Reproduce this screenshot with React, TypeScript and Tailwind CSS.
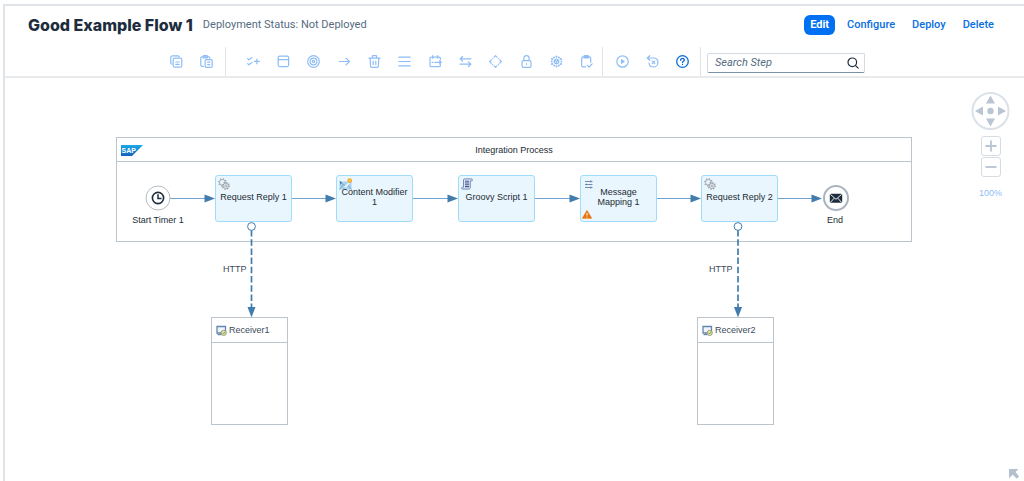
import React from "react";

type IconProps = { children: React.ReactNode; className?: string };

function Icon({ children, className = "size-[13px]" }: IconProps) {
  return (
    <svg
      viewBox="0 0 13 13"
      className={className}
      fill="none"
      stroke="currentColor"
      strokeWidth={1.2}
      strokeLinecap="round"
      strokeLinejoin="round"
      aria-hidden="true"
    >
      {children}
    </svg>
  );
}

const clipboardTools = [
  {
    label: "Copy",
    icon: (
      <Icon>
        <path d="M1.8 9.2C1 9 .8 8.4.8 7.8V2.4C.8 1.4 1.4.8 2.4.8h5.4c.8 0 1.3.3 1.5 1" />
        <rect x="3.2" y="3.2" width="8.6" height="9" rx="1.5" />
        <path d="M5.8 7h3.5M5.8 9.3h3.5" />
      </Icon>
    ),
  },
  {
    label: "Paste",
    icon: (
      <Icon>
        <path d="M3.5 11.4H2.2c-.8 0-1.4-.6-1.4-1.4V3.2c0-.8.6-1.4 1.4-1.4h6.4c.8 0 1.4.5 1.4 1.4" />
        <path d="M3.2 2.8V1.2c0-.4.2-.6.6-.6h3c.4 0 .6.2.6.6v1.6z" />
        <rect x="5.2" y="4.6" width="7" height="7.8" rx="1.2" />
        <path d="M7.6 7.2h2.2M7.6 9.6h2.2" />
      </Icon>
    ),
  },
];

const stepTools = [
  {
    label: "Mapping",
    icon: (
      <Icon>
        <path d="M.6 3.6l1.3 1.2L5 2.4M.6 8.6l1.3 1.2L5 7.4M7.4 6.4h5M9.9 4v4.8" />
      </Icon>
    ),
  },
  {
    label: "Participants",
    icon: (
      <Icon>
        <rect x="1.2" y="1.2" width="10.4" height="10.4" rx="1.5" />
        <path d="M1.2 4.6h10.4" />
      </Icon>
    ),
  },
  {
    label: "Events",
    icon: (
      <Icon>
        <circle cx="6.5" cy="6.5" r="5.8" />
        <circle cx="6.5" cy="6.5" r="3.4" />
        <circle cx="6.5" cy="6.5" r="1.1" />
      </Icon>
    ),
  },
  {
    label: "Connector",
    icon: (
      <Icon>
        <path d="M1.4 6.5h10M8 3.1l3.5 3.4L8 9.9" />
      </Icon>
    ),
  },
  {
    label: "Delete step",
    icon: (
      <Icon>
        <path d="M1 3.2h11M4.4 3V1.2c0-.4.2-.6.6-.6h3c.4 0 .6.2.6.6V3M2.2 3.2l.4 7.8c0 .8.5 1.3 1.3 1.3h5.2c.8 0 1.3-.5 1.3-1.3l.4-7.8M5.2 6.2v3.3M7.8 6.2v3.3" />
      </Icon>
    ),
  },
  {
    label: "List",
    icon: (
      <Icon>
        <path d="M.8 2.2h11.4M.8 6.5h11.4M.8 10.8h11.4" />
      </Icon>
    ),
  },
  {
    label: "Call",
    icon: (
      <Icon>
        <path d="M11.4 4.6V3.4c0-.8-.5-1.3-1.3-1.3H2.3C1.500 2.100 1 2.600 1 3.400v7c0 .8.5 1.300 1.300 1.300h7.800c.8 0 1.300-.5 1.300-1.300V9.600M3.700.6v2.600M8.700.6v2.600M3.200 7.300h.8M5.800 7.300h6.400M10.600 5.700l1.700 1.600-1.700 1.600" />
      </Icon>
    ),
  },
  {
    label: "Message routing",
    icon: (
      <Icon>
        <path d="M12 3.8H1.200M3.600 1.500L1.200 3.800l2.400 2.300M1 9.200h10.800M9.400 6.900l2.400 2.300-2.400 2.300" />
      </Icon>
    ),
  },
  {
    label: "Gateway",
    icon: (
      <Icon>
        <path d="M5 2.200L6.500.7l1.500 1.500M10.800 5l1.500 1.500L10.800 8M8 10.800l-1.500 1.500L5 10.800M2.200 8L.7 6.500 2.200 5M3.500 3.700l.1-.1M9.400 3.600l.1.1M9.400 9.500l.1-.1M3.500 9.400l.1.1" />
      </Icon>
    ),
  },
  {
    label: "Security",
    icon: (
      <Icon>
        <rect x="2" y="5.600" width="9" height="6.700" rx="1.300" />
        <path d="M3.900 5.500V3.200C3.900 1.600 5 .6 6.500.6s2.600 1 2.600 2.600v2.300M6.500 8.500v1" />
      </Icon>
    ),
  },
  {
    label: "Persistence",
    icon: (
      <Icon>
        <path d="M6.500 1.400v.4M6.500 11.200v.4M1.900 3.900l.4.200M11.100 3.900l-.4.200M1.900 9.100l.4-.2M11.100 9.100l-.4-.2M4.100 2.500l.1-.1M8.900 2.500l-.1-.1M4.100 10.500l.1.100M8.900 10.500l-.1.100M1.600 6.500h.1M11.400 6.500h.1" strokeWidth={1.900} />
        <path d="M6.500 4l2.200 1.200v2.600L6.500 9 4.300 7.800V5.200zM6.500 6.500v2.300M4.500 5.400l2 1.100 2-1.100" />
      </Icon>
    ),
  },
  {
    label: "Validator",
    icon: (
      <Icon>
        <path d="M5.600 11.900H3c-.8 0-1.300-.5-1.300-1.300V3.200c0-.8.5-1.300 1.300-1.300h6.400c.8 0 1.300.5 1.300 1.300v4M4 3V1.200c0-.4.2-.6.600-.6h3.200c.4 0 .6.2.6.6V3zM7.400 10.400l1.700 1.700 3-3.300" />
      </Icon>
    ),
  },
];

const runTools = [
  {
    label: "Run simulation",
    tone: "text-[#8fbdf5]",
    icon: (
      <Icon>
        <circle cx="6.500" cy="6.500" r="5.700" />
        <path d="M5.500 4.800v3.400l2.600-1.700z" fill="currentColor" />
      </Icon>
    ),
  },
  {
    label: "Clear simulation",
    tone: "text-[#8fbdf5]",
    icon: (
      <Icon>
        <path d="M1.400 3h6.200c2.600 0 4.300 1.900 4.300 4.400S10 12 7.500 12c-2.600 0-4.300-1.700-4.500-4M3.700.7L1.300 3l2.400 2.300M6.200 6.100l2.600 2.600M8.800 6.100L6.200 8.700" />
      </Icon>
    ),
  },
  {
    label: "Help",
    tone: "text-[#0a6cd9]",
    icon: (
      <Icon>
        <circle cx="6.500" cy="6.500" r="5.800" strokeWidth={1.300} />
        <path d="M4.700 5.200c0-1.100.8-1.800 1.800-1.800s1.800.7 1.800 1.600c0 1.300-1.800 1.300-1.800 2.600M6.500 9.500v.1" strokeWidth={1.400} />
      </Icon>
    ),
  },
];

function ToolButton({ label, tone = "text-[#8fbdf5]", children }: { label: string; tone?: string; children: React.ReactNode }) {
  return (
    <button type="button" aria-label={label} className={`flex h-7 flex-1 items-center justify-center ${tone}`}>
      {children}
    </button>
  );
}

function GearsIcon() {
  return (
    <svg viewBox="0 0 12 12" className="size-3" fill="none" stroke="#a0a8ae" aria-hidden="true">
      <circle cx="4.400" cy="4.400" r="2.900" strokeWidth="1" />
      <circle cx="4.400" cy="4.400" r="3.700" strokeWidth="1.300" strokeDasharray="1.200 1.700" />
      <circle cx="7.800" cy="7.800" r="2.700" fill="#e6eef3" strokeWidth="1" />
      <circle cx="7.800" cy="7.800" r="3.500" strokeWidth="1.300" strokeDasharray="1.200 1.550" />
      <circle cx="7.800" cy="7.800" r="1" strokeWidth=".9" />
    </svg>
  );
}

function ModifierIcon() {
  return (
    <svg viewBox="0 0 14 12" className="h-3 w-3.5" aria-hidden="true">
      <path d="M.5 3.500h12v8H.5z" fill="#a9d2ee" />
      <path d="M.5 3.500l6 4.500 6-4.500M.5 11.500l4-5M12.500 11.500l-4-5" fill="none" stroke="#6fa6cf" strokeWidth=".9" />
      <path d="M5 8.500L10 4l1.200 1.200L6.500 10z" fill="#e8f3fa" />
      <path d="M1 3l2 1.500L1 7z" fill="#3f7fb5" />
      <circle cx="10.700" cy="2.600" r="2.300" fill="#f5a623" />
      <circle cx="10.700" cy="2.600" r="1.100" fill="#ffd34d" />
    </svg>
  );
}

function ScriptIcon() {
  return (
    <svg viewBox="0 0 12 12" className="size-3" fill="none" stroke="#6a7fae" aria-hidden="true">
      <path d="M3.200.9h7.200c1.400 0 1.400 2 0 2H9.300v6.600c0 1-.5 1.600-1.400 1.600H1.600c-1.300 0-1.300-1.900 0-1.900h.9V2c0-.6.200-1.100.7-1.100z" fill="#dbe4f4" strokeWidth=".9" />
      <path d="M4 3.200h4M4 5h4M4 6.800h4M4 8.600h4" stroke="#44598f" strokeWidth="1.100" />
    </svg>
  );
}

function MappingIcon() {
  return (
    <svg viewBox="0 0 12 12" className="size-3" fill="none" stroke="#7189b5" aria-hidden="true">
      <path d="M2 3.500h7.500M2 6.500h7.500M2 9.500h7.500" strokeWidth="1" />
      <path d="M7.300 2.500l1.700 1-1.700 1M3.500 5.500v2M7.300 8.500l1.700 1-1.700 1" strokeWidth=".7" />
    </svg>
  );
}

function WarningIcon() {
  return (
    <svg viewBox="0 0 10 9" className="h-[9px] w-2.5" role="img" aria-label="Warning">
      <path d="M5 .4L9.700 8.300H.3z" fill="#e9730c" stroke="#e9730c" strokeWidth=".6" strokeLinejoin="round" />
      <path d="M5 3v2.600M5 6.600v.9" stroke="#fff" strokeWidth="1" />
    </svg>
  );
}

function ReceiverIcon() {
  return (
    <svg viewBox="0 0 11 11" className="size-[11px]" aria-hidden="true">
      <path d="M1 1.500h8.500v6.500H1z" fill="#eef4fa" stroke="#6485ae" strokeWidth="1.300" />
      <path d="M1.500 9.600h4" stroke="#6485ae" strokeWidth="1.200" />
      <circle cx="7.700" cy="7.900" r="2.600" fill="#dfe3a5" stroke="#87906d" strokeWidth=".8" />
      <path d="M6.500 7.900l1 1 1.600-1.900" fill="none" stroke="#6f8f3a" strokeWidth=".8" />
    </svg>
  );
}

const steps = [
  { name: "Request Reply 1", place: "left-[211px]", icon: <GearsIcon />, warn: false },
  { name: "Content Modifier 1", place: "left-[332px]", icon: <ModifierIcon />, warn: false },
  { name: "Groovy Script 1", place: "left-[454px]", icon: <ScriptIcon />, warn: false },
  { name: "Message Mapping 1", place: "left-[576px]", icon: <MappingIcon />, warn: true },
  { name: "Request Reply 2", place: "left-[697px]", icon: <GearsIcon />, warn: false },
];

function StepNode({ name, place, icon, warn }: (typeof steps)[number]) {
  return (
    <div
      className={`absolute top-[97px] flex h-[47px] w-[77px] items-center justify-center rounded-[3px] border border-[#9fdbfb] bg-[#eaf6fe] px-1 pb-1 text-center ${place}`}
    >
      <span className="absolute left-0.5 top-0.5">{icon}</span>
      <span className="relative">{name}</span>
      {warn && (
        <span className="absolute bottom-0.5 left-px">
          <WarningIcon />
        </span>
      )}
    </div>
  );
}

function Receiver({ name, place }: { name: string; place: string }) {
  return (
    <div className={`absolute top-[239px] h-[108px] w-[77px] border border-[#bcc5ce] bg-white ${place}`}>
      <div className="flex h-[25px] items-center gap-0.5 border-b border-[#bcc5ce] pl-1 text-[#3c4a5a]">
        <ReceiverIcon />
        <span>{name}</span>
      </div>
    </div>
  );
}

const flowLines = [
  { from: 166, to: 211 },
  { from: 288, to: 332 },
  { from: 409, to: 454 },
  { from: 531, to: 576 },
  { from: 653, to: 697 },
  { from: 774, to: 818 },
];

function Connections() {
  return (
    <svg viewBox="0 0 920 360" className="absolute left-0 top-0 h-[360px] w-[920px]" aria-hidden="true">
      {flowLines.map(({ from, to }) => (
        <g key={from}>
          <path d={`M${from} 120.500H${to - 9}`} stroke="#6ea3cf" strokeWidth="1.200" />
          <path d={`M${to} 120.500l-10.500-4v8z`} fill="#427cac" />
        </g>
      ))}
      {[247.500, 734].map((x) => (
        <g key={x}>
          <path d={`M${x} 152V230`} stroke="#427cac" strokeWidth="1.700" strokeDasharray="6.500 2.700" />
          <path d={`M${x} 239.500l-4-10.500h8z`} fill="#427cac" />
          <circle cx={x} cy="148.500" r="3.900" fill="#fff" stroke="#427cac" strokeWidth="1" />
        </g>
      ))}
    </svg>
  );
}

function Navigator() {
  return (
    <div className="absolute right-3.5 top-3.5 flex w-[39px] flex-col items-center text-[#b9c5d2]">
      <button type="button" aria-label="Pan" className="size-[39px]">
        <svg viewBox="0 0 39 39" fill="currentColor" className="size-[39px]">
          <circle cx="19.500" cy="19" r="18" fill="#fff" stroke="#dbe1e8" strokeWidth="2" />
          <circle cx="19.500" cy="19" r="3.200" />
          <path d="M19.500 3.500l4.500 8h-9zM19.500 34.500l4.500-8h-9zM4 19l8-4.500v9zM35 19l-8-4.500v9z" />
        </svg>
      </button>
      <button type="button" aria-label="Zoom in" className="mt-[5px] flex size-5 items-center justify-center rounded-[3px] border border-[#d5dce4] bg-white">
        <svg viewBox="0 0 12 12" className="size-3" fill="none" stroke="currentColor" strokeWidth="1.800">
          <path d="M6 .5v11M.5 6h11" />
        </svg>
      </button>
      <button type="button" aria-label="Zoom out" className="mt-px flex size-5 items-center justify-center rounded-[3px] border border-[#d5dce4] bg-white">
        <svg viewBox="0 0 12 12" className="size-3" fill="none" stroke="currentColor" strokeWidth="1.800">
          <path d="M.5 6h11" />
        </svg>
      </button>
      <a href="#zoom" className="mt-2.5 text-[9px] leading-3 text-[#8fbdf5]">
        100%
      </a>
    </div>
  );
}

export default function App() {
  return (
    <div className="flex min-h-screen flex-col bg-white pl-[3px] pt-1 font-[Roboto,'Open_Sans',sans-serif]">
      <div className="flex grow flex-col border-l-2 border-t-2 border-[#e0e3e7]">
        <header className="flex h-[41px] items-center justify-between pb-1 pl-[23px] pr-[30px]">
          <div className="flex items-center gap-2.5">
            <h1 className="font-[Inter,sans-serif] text-[16px] font-extrabold leading-5 text-[#1d2d3e]">Good Example Flow 1</h1>
            <p className="text-[11px] leading-4 text-[#556b82]">Deployment Status: Not Deployed</p>
          </div>
          <div className="flex items-center gap-[17px] text-[11px] font-medium leading-5 text-[#0a6fe0]">
            <button type="button" className="mr-[-5px] h-5 rounded-[6px] bg-[#0070f2] px-1.5 font-bold text-white">
              Edit
            </button>
            <button type="button">Configure</button>
            <button type="button">Deploy</button>
            <button type="button">Delete</button>
          </div>
        </header>

        <div className="flex h-[31px] justify-center border-b-2 border-[#e8eaec] pr-[3px]">
          <div className="flex w-[65px] items-center border-r border-[#e0e3e7] pr-1">
            {clipboardTools.map((t) => (
              <ToolButton key={t.label} label={t.label}>
                {t.icon}
              </ToolButton>
            ))}
          </div>
          <div className="flex w-[377px] items-center border-r border-[#e0e3e7] pl-3">
            {stepTools.map((t) => (
              <ToolButton key={t.label} label={t.label}>
                {t.icon}
              </ToolButton>
            ))}
          </div>
          <div className="flex w-[98px] items-center border-r border-[#e0e3e7] pl-1 pr-[3px]">
            {runTools.map((t) => (
              <ToolButton key={t.label} label={t.label} tone={t.tone}>
                {t.icon}
              </ToolButton>
            ))}
          </div>
          <label className="ml-1.5 mt-1.5 flex h-5 w-[158px] items-center rounded-[2px] border border-[#d3dae2] border-b-[#7b91a8] bg-white pl-[7px] pr-[5px]">
            <input
              type="text"
              aria-label="Search Step"
              placeholder="Search Step"
              className="min-w-0 flex-1 text-[11px] italic leading-4 text-[#1d2d3e] outline-none placeholder:text-[#556b82]"
            />
            <svg viewBox="0 0 12 12" className="size-3" fill="none" stroke="#1d2d3e" strokeWidth="1.200" strokeLinecap="round" aria-hidden="true">
              <circle cx="5.300" cy="5.300" r="4.300" />
              <path d="M8.600 8.600l2.600 2.600" />
            </svg>
          </label>
        </div>

        <main className="relative min-h-[400px] grow overflow-hidden font-['Liberation_Sans',Arial,sans-serif] text-[9px] leading-[10px] text-[#222b33]">
          <div className="absolute inset-y-0 -left-px w-[920px]">
            <section className="absolute left-[112px] top-[59px] h-[105px] w-[796px] border border-[#bcc5ce]">
              <div className="flex h-6 items-center justify-center border-b border-[#bcc5ce]">
                <h2>Integration Process</h2>
              </div>
              <svg viewBox="0 0 22 11" className="absolute left-1 top-[7px] h-[11px] w-[22px]" role="img" aria-label="SAP">
                <defs>
                  <linearGradient id="sap" x1="0" y1="0" x2="0" y2="1">
                    <stop offset="0" stopColor="#1aabe6" />
                    <stop offset="1" stopColor="#1561bd" />
                  </linearGradient>
                </defs>
                <path d="M0 0h22L11 11H0z" fill="url(#sap)" />
                <text x="0.500" y="8" fontSize="7" fontWeight="bold" fill="#fff">
                  SAP
                </text>
              </svg>
            </section>
            <Connections />
            <svg viewBox="0 0 26 26" className="absolute left-[141px] top-[107px] size-[26px]" fill="none" stroke="#1d2d3e" aria-hidden="true">
              <circle cx="13" cy="13" r="12" fill="#fff" stroke="#b4bcc4" strokeWidth="1" />
              <circle cx="13" cy="13" r="5.600" strokeWidth="1.600" />
              <path d="M13 9.300V13.500h3.500" strokeWidth="1.500" />
            </svg>
            <p className="absolute left-[124px] top-[137px] w-[60px] text-center">Start Timer 1</p>
            {steps.map((s) => (
              <StepNode key={s.name} {...s} />
            ))}
            <svg viewBox="0 0 26 26" className="absolute left-[819px] top-[107px] size-[26px]" fill="none" aria-hidden="true">
              <circle cx="13" cy="13" r="12" fill="#fff" stroke="#a9b4c1" strokeWidth="2" />
              <rect x="6.800" y="8.800" width="12.400" height="9" rx="1" fill="#1d2d3e" />
              <path d="M7.300 9.300l5.700 5 5.700-5M7.300 17.500l4-4.400M18.700 17.500l-4-4.400" stroke="#fff" strokeWidth=".9" />
            </svg>
            <p className="absolute left-[801px] top-[137px] w-[60px] text-center">End</p>
            <p className="absolute left-[219px] top-[186px] text-[#3c4a5a]">HTTP</p>
            <p className="absolute left-[705px] top-[186px] text-[#3c4a5a]">HTTP</p>
            <Receiver name="Receiver1" place="left-[207px]" />
            <Receiver name="Receiver2" place="left-[693px]" />
          </div>
          <Navigator />
          <button type="button" aria-label="Open overview" className="absolute bottom-0.5 right-[5px] text-[#b4c0cd]">
            <svg viewBox="0 0 10 10" className="size-2.5" fill="currentColor">
              <path d="M0 0h9.500L6.600 3l3.400 4.500L8 9.800 3.600 5.800 0 9.500z" />
            </svg>
          </button>
        </main>
      </div>
    </div>
  );
}
